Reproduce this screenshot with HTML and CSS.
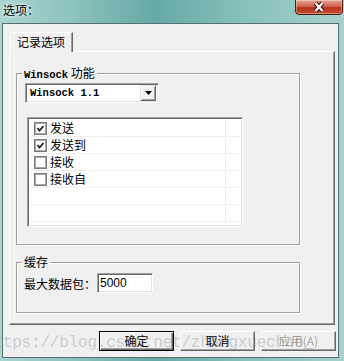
FILE: index.html
```html
<!DOCTYPE html>
<html lang="zh-CN">
  <head>
    <meta charset="UTF-8" />
    <title>选项</title>
    <link rel="stylesheet" href="styles.css">
  </head>
  <body>
    <div class="window">
      <div class="titlebar">
        <span class="title">选项：</span>
        <div class="close-btn">
          <svg width="14" height="12" viewBox="0 0 14 12">
            <path d="M3.5 2 L10.5 10 M10.5 2 L3.5 10" stroke="#3b1510" stroke-width="4.5" />
            <path d="M3.5 2 L10.5 10 M10.5 2 L3.5 10" stroke="#fff" stroke-width="2.2" />
          </svg>
        </div>
      </div>

      <div class="client">
        <div class="tabs">
          <div class="tab">记录选项</div>
        </div>

        <div class="tab-panel">
          <div class="group group-winsock">
            <span class="group-title"><span class="mono">Winsock</span> 功能</span>
            <div class="combo">
              <span class="combo-text mono">Winsock 1.1</span>
              <span class="combo-arrow">
                <svg width="7" height="4" viewBox="0 0 7 4"><path d="M0 0 H7 L3.5 4 Z" fill="#000" /></svg>
              </span>
            </div>
            <div class="listbox">
              <div class="row"><div class="cell"><span class="check on"></span>发送</div><div class="cell-end"></div></div>
              <div class="row"><div class="cell"><span class="check on"></span>发送到</div><div class="cell-end"></div></div>
              <div class="row"><div class="cell"><span class="check"></span>接收</div><div class="cell-end"></div></div>
              <div class="row"><div class="cell"><span class="check"></span>接收自</div><div class="cell-end"></div></div>
              <div class="row"><div class="cell"></div><div class="cell-end"></div></div>
              <div class="row"><div class="cell"></div><div class="cell-end"></div></div>
              <div class="row"><div class="cell"></div><div class="cell-end"></div></div>
            </div>
          </div>

          <div class="group group-cache">
            <span class="group-title">缓存</span>
            <div class="field">
              <label for="max-packets">最大数据包：</label>
              <input id="max-packets" class="textbox" type="text" value="5000" />
            </div>
          </div>
        </div>

        <div class="buttons">
          <div class="btn btn-default">确定</div>
          <div class="btn">取消</div>
          <div class="btn btn-disabled">应用(A)</div>
        </div>
      </div>

      <div class="watermark">https://blog.csdn.net/zhangxuechao_</div>
    </div>
  </body>
</html>
```

FILE: styles.css
```css
* {
  box-sizing: border-box;
}
body {
  margin: 0;
  width: 344px;
  height: 361px;
  overflow: hidden;
  font-family: "Noto Sans CJK SC", sans-serif;
  font-size: 12px;
  color: #000;
  background: linear-gradient(90deg, #a9d4cf 0%, #8fc3be 20%, #66a9a4 45%, #86bfba 70%, #a6d1cc 100%);
}
.mono {
  font-family: "Liberation Mono", monospace;
  font-size: 10.5px;
  font-weight: bold;
}
.window {
  position: relative;
  height: 361px;
  display: flex;
  flex-direction: column;
}
.titlebar {
  height: 23px;
  display: flex;
  align-items: flex-start;
}
.title {
  padding: 3px 0 0 3px;
  line-height: 14px;
  text-shadow: 0 0 5px #fff, 0 0 3px #fff;
}
.close-btn {
  margin-left: auto;
  margin-right: 1px;
  margin-top: -1px;
  width: 48px;
  height: 16px;
  border: 1px solid #4b1e16;
  border-radius: 0 0 4px 4px;
  background: linear-gradient(#e7a394, #d0644f 45%, #b7321c 55%, #c84b30);
  box-shadow: inset 0 0 0 1px rgba(255, 255, 255, 0.35);
  display: flex;
  align-items: center;
  justify-content: center;
}
.client {
  margin: 0 5px 3px 2px;
  height: 335px;
  border: 1px solid #54716e;
  background: #f0f0f0;
  padding: 8px 2px 0 6px;
  display: flex;
  flex-direction: column;
}
.tabs {
  display: flex;
  height: 19px;
  padding-left: 1px;
}
.tab {
  position: relative;
  z-index: 1;
  width: 63px;
  height: 20px;
  padding: 1px 0 0 6px;
  background: #f0f0f0;
  border: 1px solid;
  border-color: #fff #696969 #f0f0f0 #fff;
  border-bottom: none;
  box-shadow: inset -1px 0 #a0a0a0;
  line-height: 16px;
}
.tab-panel {
  width: 326px;
  height: 274px;
  border: 1px solid;
  border-color: #fff #696969 #696969 #fff;
  box-shadow: inset -1px -1px #a0a0a0;
  padding: 21px 0 0 6px;
}
.group {
  position: relative;
  width: 284px;
  border: 1px solid #a0a0a0;
  box-shadow: 1px 1px 0 #fff, inset 1px 1px 0 #fff;
}
.group-title {
  position: absolute;
  top: -8px;
  left: 5px;
  padding: 0 2px;
  background: #f0f0f0;
  line-height: 14px;
  white-space: nowrap;
}
.group-winsock {
  height: 172px;
  padding: 9px 0 0 8px;
}
.group-cache {
  height: 51px;
  margin-top: 17px;
  padding: 10px 0 0 7px;
}
.combo {
  width: 134px;
  height: 20px;
  display: flex;
  align-items: center;
  background: #fff;
  border: 1px solid;
  border-color: #a0a0a0 #fff #fff #a0a0a0;
  box-shadow: inset 1px 1px #696969, inset -1px -1px #e3e3e3;
  padding: 2px 2px 2px 4px;
}
.combo-text {
  flex: 1;
}
.combo-arrow {
  width: 16px;
  height: 16px;
  display: flex;
  align-items: center;
  justify-content: center;
  background: #f0f0f0;
  border: 1px solid;
  border-color: #e3e3e3 #696969 #696969 #e3e3e3;
  box-shadow: inset 1px 1px #fff, inset -1px -1px #a0a0a0;
}
.listbox {
  width: 216px;
  height: 110px;
  margin: 14px 0 0 2px;
  overflow: hidden;
  background: #fff;
  border: 1px solid;
  border-color: #a0a0a0 #fff #fff #a0a0a0;
  box-shadow: inset 1px 1px #696969, inset -1px -1px #e3e3e3;
  padding: 2px 2px 0 2px;
}
.row {
  display: flex;
  height: 17px;
  border-bottom: 1px solid #efefef;
}
.cell {
  width: 196px;
  display: flex;
  align-items: center;
  gap: 3px;
  padding-left: 4px;
  border-right: 1px solid #efefef;
  line-height: 16px;
}
.cell-end {
  flex: 1;
}
.check {
  width: 13px;
  height: 13px;
  background: #fff;
  border: 1px solid #7a7a7a;
  box-shadow: inset 0 0 0 1px #a8a8a8;
}
.check.on {
  background: #fff url("data:image/svg+xml;utf8,<svg xmlns='http://www.w3.org/2000/svg' width='11' height='11'><path d='M2.5 5 L4.5 7.5 L8.5 3' fill='none' stroke='%23222' stroke-width='1.8'/></svg>") center no-repeat;
}
.field {
  display: flex;
  align-items: center;
}
.field label {
  width: 73px;
}
.textbox {
  width: 56px;
  height: 20px;
  margin: 0;
  padding: 0 0 0 2px;
  font-family: "Liberation Sans", sans-serif;
  font-size: 12px;
  color: #000;
  background: #fff;
  border: 1px solid;
  border-color: #a0a0a0 #fff #fff #a0a0a0;
  box-shadow: inset 1px 1px #696969, inset -1px -1px #e3e3e3;
  outline: none;
}
.buttons {
  display: flex;
  justify-content: flex-end;
  gap: 6px;
  margin-top: 6px;
}
.btn {
  width: 75px;
  height: 20px;
  display: flex;
  align-items: center;
  justify-content: center;
  background: #f0f0f0;
  border: 1px solid;
  border-color: #fff #696969 #696969 #fff;
  box-shadow: inset -1px -1px #a0a0a0;
  line-height: 14px;
}
.btn-default {
  border-color: #000;
  box-shadow: inset 1px 1px #fff, inset -1px -1px #696969, inset -2px -2px #a0a0a0;
}
.btn-disabled {
  color: #a0a0a0;
  text-shadow: 1px 1px #fff;
}
.watermark {
  position: absolute;
  left: -16px;
  top: 335px;
  font-family: "Liberation Mono", monospace;
  font-size: 16px;
  letter-spacing: -0.2px;
  line-height: 16px;
  color: rgba(110, 110, 110, 0.3);
  white-space: nowrap;
  pointer-events: none;
}
```
